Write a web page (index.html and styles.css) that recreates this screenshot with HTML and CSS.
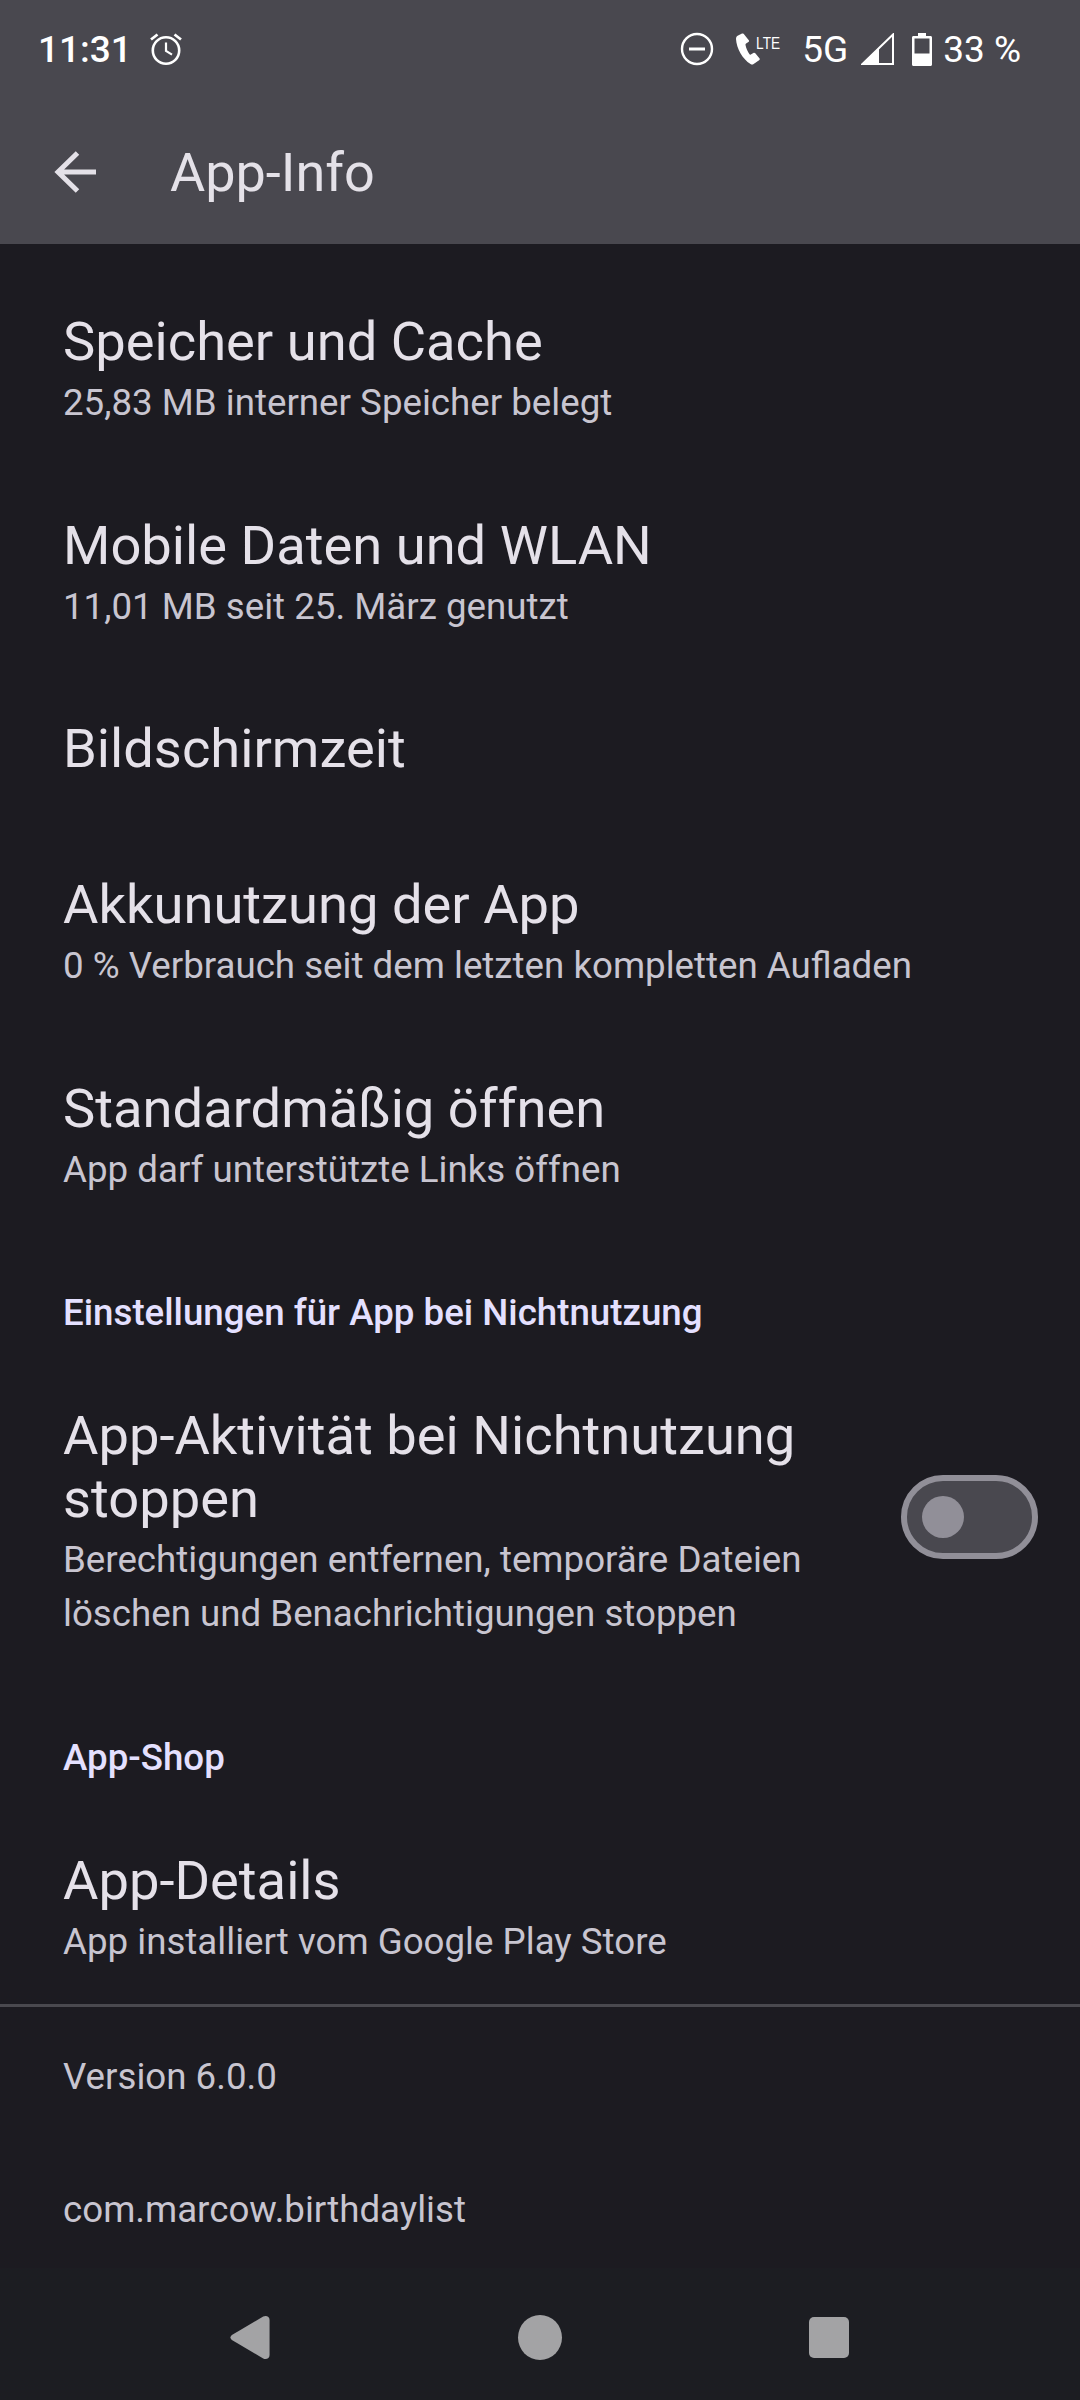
FILE: index.html
```html
<!DOCTYPE html>
<html lang="de">
<head>
    <meta charset="UTF-8">
    <meta name="viewport" content="width=device-width, initial-scale=1.0">
    <title>App-Info</title>
    <link rel="stylesheet" href="styles.css">
</head>
<body>
    <div class="screen">
        <header class="topbar">
            <div class="statusbar">
                <div class="status-left">
                    <span class="clock">11:31</span>
                    <svg class="ic-alarm" viewBox="0 0 34 34" fill="none" stroke="#fff" stroke-width="2.6">
                        <circle cx="17" cy="18.5" r="13.2"/>
                        <path d="M17 10.500V19l6 3.600" stroke-width="2.2"/>
                        <path d="M2 7.500 8.500 2.500M32 7.500 25.500 2.500" stroke-width="2.8"/>
                    </svg>
                </div>
                <div class="status-right">
                    <svg class="ic-dnd" viewBox="0 0 34 34" fill="none" stroke="#fff">
                        <circle cx="17" cy="17" r="15" stroke-width="2.4"/>
                        <path d="M9 17H25" stroke-width="3"/>
                    </svg>
                    <span class="call">
                        <svg class="ic-call" viewBox="0 0 24 32" fill="#fff">
                            <path d="M6 .6 1.600 2.800C.6 3.300 0 4.500 0 6c.5 9.500 6.500 20 14.500 25 1.200.8 2.300.7 3.100-.1l5.500-3.600c.8-.6.900-1.400.3-2.100l-4.100-4.900c-.6-.6-1.200-.7-1.900-.3l-2.600 1.500c-.5.3-1 .2-1.300-.3-2-2.900-3.300-6-4-9.300-.1-.5.1-1 .6-1.300l2.300-1.500c.6-.4.800-1 .6-1.700L8.200 1.500C7.900.6 6.900.2 6 .6Z"/>
                        </svg>
                        <span class="lte">LTE</span>
                    </span>
                    <span class="net">5G</span>
                    <svg class="ic-signal" viewBox="0 0 33 32" fill="none">
                        <path d="M32 1.500V31H1.500Z" stroke="#fff" stroke-width="2"/>
                        <path d="M18 15.500V31H1.500Z" fill="#fff"/>
                    </svg>
                    <svg class="ic-battery" viewBox="0 0 20 33" fill="none">
                        <path d="M6 0h8v3h4.500C19.400 3 20 3.600 20 4.500V31.500c0 .9-.6 1.500-1.500 1.500H1.500C.6 33 0 32.400 0 31.500V4.500C0 3.600.6 3 1.500 3H6Z" fill="#fff"/>
                        <rect x="2.500" y="5.500" width="15" height="15" fill="#49484f"/>
                    </svg>
                    <span class="percent">33 %</span>
                </div>
            </div>
            <div class="appbar">
                <svg class="ic-back" viewBox="0 0 42 42" fill="none" stroke="#e4e1e8" stroke-width="5">
                    <path d="M42 21H4M23.500 2 4 21l19.500 19"/>
                </svg>
                <h1>App-Info</h1>
            </div>
        </header>

        <main class="list">
            <div class="item">
                <div class="title">Speicher und Cache</div>
                <div class="sub">25,83 MB interner Speicher belegt</div>
            </div>
            <div class="item">
                <div class="title">Mobile Daten und WLAN</div>
                <div class="sub">11,01 MB seit 25. März genutzt</div>
            </div>
            <div class="item item-single">
                <div class="title">Bildschirmzeit</div>
            </div>
            <div class="item">
                <div class="title">Akkunutzung der App</div>
                <div class="sub">0 % Verbrauch seit dem letzten kompletten Aufladen</div>
            </div>
            <div class="item">
                <div class="title">Standardmäßig öffnen</div>
                <div class="sub">App darf unterstützte Links öffnen</div>
            </div>

            <div class="section">Einstellungen für App bei Nichtnutzung</div>
            <div class="item item-switch">
                <div class="item-text">
                    <div class="title">App-Aktivität bei Nichtnutzung stoppen</div>
                    <div class="sub">Berechtigungen entfernen, temporäre Dateien löschen und Benachrichtigungen stoppen</div>
                </div>
                <div class="switch"><span class="knob"></span></div>
            </div>

            <div class="section section-shop">App-Shop</div>
            <div class="item item-last">
                <div class="title">App-Details</div>
                <div class="sub">App installiert vom Google Play Store</div>
            </div>

            <div class="footer">
                <div class="foot-line">Version 6.0.0</div>
                <div class="foot-line foot-pkg">com.marcow.birthdaylist</div>
            </div>
        </main>

        <nav class="navbar">
            <svg class="nav-back" viewBox="0 0 40 46" fill="#a3a3a5">
                <path d="M1.500 20.500 33.500 1.500C36.500 0 40 1.500 40 5V41c0 3.500-3.500 5-6.500 3.500L1.500 25.500C-.5 24-.5 22 1.500 20.500Z"/>
            </svg>
            <span class="nav-home"></span>
            <span class="nav-recent"></span>
        </nav>
    </div>
</body>
</html>
```

FILE: styles.css
```css
* {
    box-sizing: border-box;
}
html, body {
    margin: 0;
    padding: 0;
}
body {
    width: 1080px;
    height: 2400px;
    background-color: #1c1b21;
    font-family: Roboto, "Noto Sans", sans-serif;
    overflow: hidden;
}
.screen {
    height: 2400px;
    display: flex;
    flex-direction: column;
}
.topbar {
    height: 244px;
    flex: none;
    background-color: #49484f;
}
.statusbar {
    height: 100px;
    padding: 0 59px 2px 38px;
    display: flex;
    justify-content: space-between;
    align-items: center;
    color: #fff;
}
.status-left, .status-right {
    display: flex;
    align-items: center;
}
.clock {
    font-size: 37px;
    font-weight: 500;
}
.ic-alarm {
    width: 34px;
    height: 34px;
    margin-left: 17px;
}
.ic-dnd {
    width: 34px;
    height: 34px;
}
.call {
    display: flex;
    align-items: flex-start;
    margin-left: 22px;
}
.ic-call {
    width: 24px;
    height: 32px;
}
.lte {
    font-family: "Liberation Sans", sans-serif;
    font-size: 16px;
    line-height: 22px;
    margin-left: -6px;
    transform: scaleX(.85);
}
.net, .percent {
    font-size: 37px;
}
.net {
    margin-left: 20px;
}
.ic-signal {
    width: 33px;
    height: 32px;
    margin-left: 13px;
}
.ic-battery {
    width: 20px;
    height: 33px;
    margin-left: 18px;
}
.percent {
    margin-left: 11px;
}
.appbar {
    height: 144px;
    display: flex;
    align-items: center;
    padding-left: 54px;
}
.ic-back {
    width: 42px;
    height: 42px;
}
h1 {
    margin: 0 0 0 74px;
    font-size: 54px;
    font-weight: 400;
    color: #e4e1e8;
}
.list {
    flex: 1;
    padding-top: 22px;
}
.item {
    padding: 44px 64px 40.5px 63px;
}
.title {
    font-size: 54.3px;
    line-height: 63px;
    color: #e5e1e9;
}
.sub {
    margin-top: 2.5px;
    font-size: 36.7px;
    line-height: 54px;
    color: #c8c5d0;
}
.item-single {
    padding: 43px 64px 49px 63px;
}
.section {
    padding: 49px 64px 21px 63px;
    font-size: 36.7px;
    font-weight: 500;
    line-height: 53px;
    color: #e4e0ff;
}
.section-shop {
    padding-top: 50px;
}
.item-switch {
    display: flex;
    align-items: center;
    padding-right: 42px;
}
.item-text {
    flex: 1;
    padding-right: 40px;
}
.switch {
    width: 137px;
    height: 84px;
    flex: none;
    margin-bottom: 10px;
    padding: 0 0 0 15px;
    display: flex;
    align-items: center;
    background-color: #49484f;
    border: 6px solid #918f98;
    border-radius: 42px;
}
.knob {
    width: 42px;
    height: 42px;
    border-radius: 50%;
    background-color: #918f98;
}
.item-last {
    padding-bottom: 35.5px;
}
.footer {
    border-top: 3px solid #4a494f;
    padding: 43px 64px 0 63px;
}
.foot-line {
    font-size: 36.7px;
    line-height: 53px;
    color: #c8c5d0;
}
.foot-pkg {
    margin-top: 80px;
}
.navbar {
    height: 132px;
    flex: none;
    display: flex;
    align-items: center;
    background-color: #1c1d22;
    padding-top: 6px;
}
.nav-back {
    width: 40px;
    height: 45px;
    margin-left: 230px;
}
.nav-home {
    width: 44px;
    height: 45px;
    margin-left: 248px;
    border-radius: 50%;
    background-color: #a3a3a5;
}
.nav-recent {
    width: 40px;
    height: 41px;
    margin-left: 247px;
    border-radius: 5px;
    background-color: #a3a3a5;
}
```
